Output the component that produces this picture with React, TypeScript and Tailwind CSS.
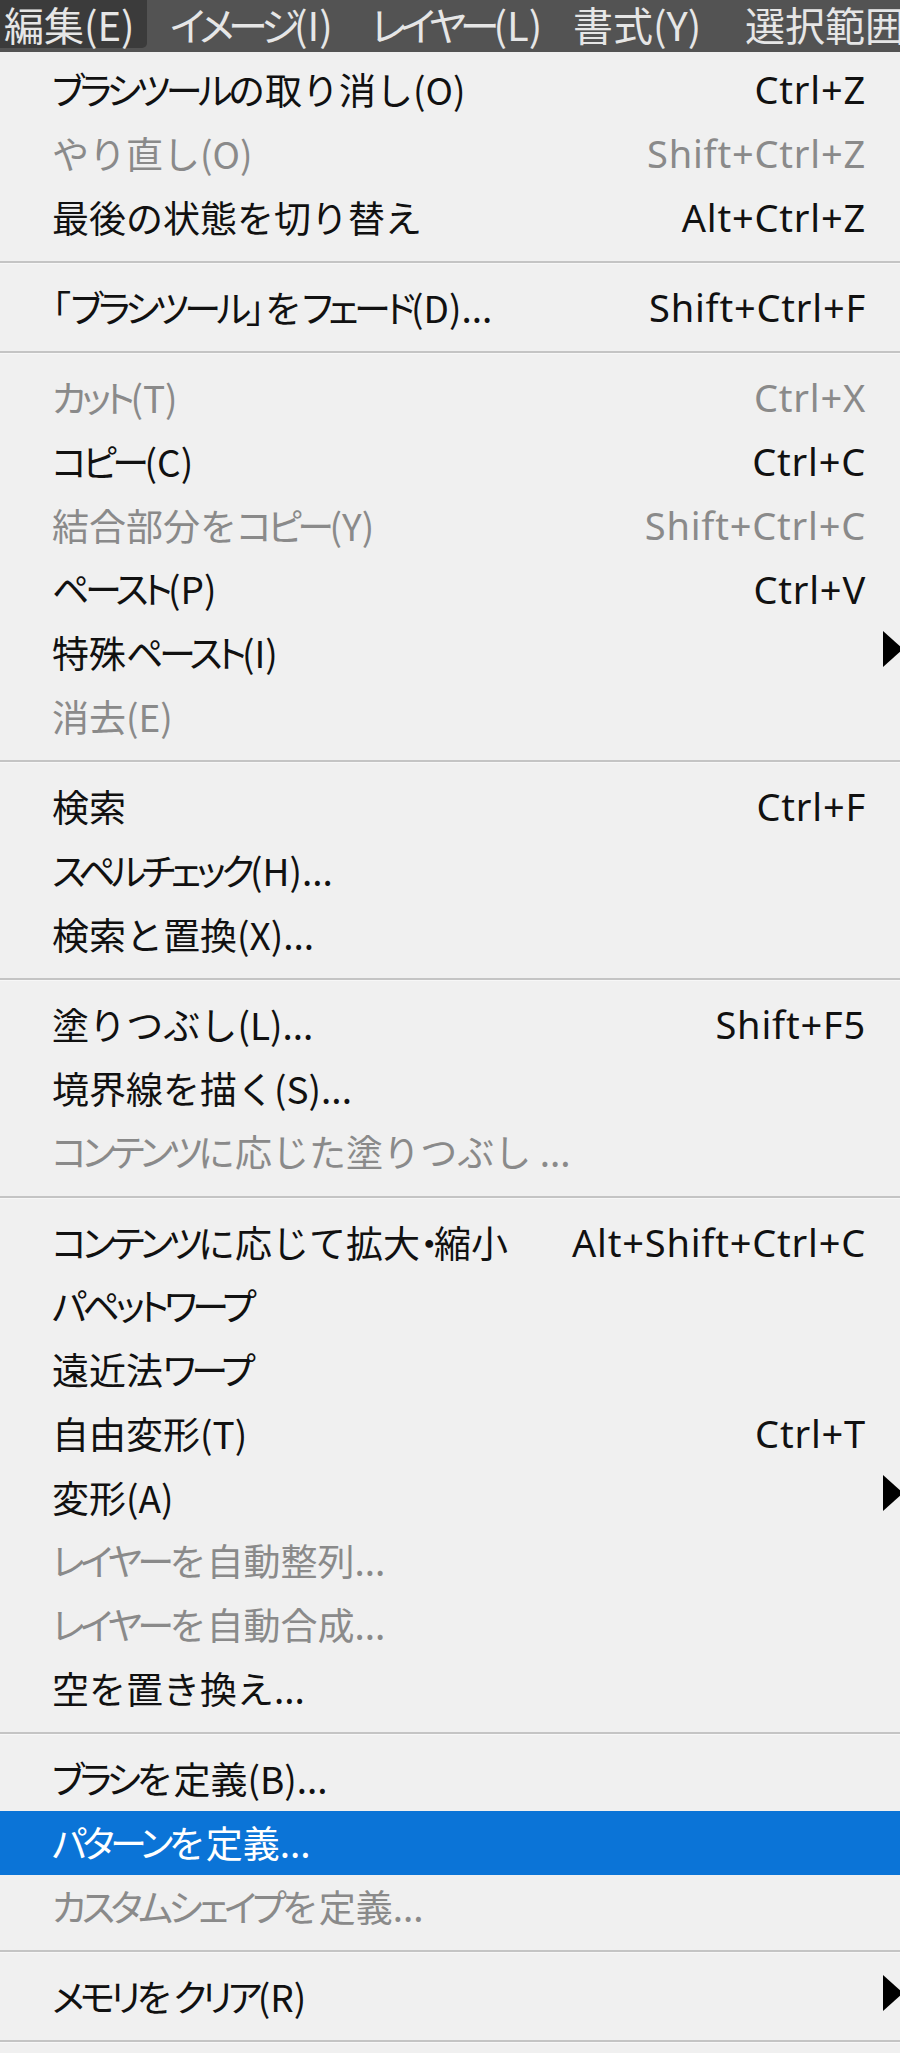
import React from "react";

type Item = {
  label: string;
  shortcut?: string;
  disabled?: boolean;
  submenu?: boolean;
  active?: boolean;
};

const groups: Item[][] = [
  [
    { label: "ブラシツールの取り消し(O)", shortcut: "Ctrl+Z" },
    { label: "やり直し(O)", shortcut: "Shift+Ctrl+Z", disabled: true },
    { label: "最後の状態を切り替え", shortcut: "Alt+Ctrl+Z" },
  ],
  [{ label: "「ブラシツール」をフェード(D)...", shortcut: "Shift+Ctrl+F" }],
  [
    { label: "カット(T)", shortcut: "Ctrl+X", disabled: true },
    { label: "コピー(C)", shortcut: "Ctrl+C" },
    { label: "結合部分をコピー(Y)", shortcut: "Shift+Ctrl+C", disabled: true },
    { label: "ペースト(P)", shortcut: "Ctrl+V" },
    { label: "特殊ペースト(I)", submenu: true },
    { label: "消去(E)", disabled: true },
  ],
  [
    { label: "検索", shortcut: "Ctrl+F" },
    { label: "スペルチェック(H)..." },
    { label: "検索と置換(X)..." },
  ],
  [
    { label: "塗りつぶし(L)...", shortcut: "Shift+F5" },
    { label: "境界線を描く(S)..." },
    { label: "コンテンツに応じた塗りつぶし ...", disabled: true },
  ],
  [
    { label: "コンテンツに応じて拡大・縮小", shortcut: "Alt+Shift+Ctrl+C" },
    { label: "パペットワープ" },
    { label: "遠近法ワープ" },
    { label: "自由変形(T)", shortcut: "Ctrl+T" },
    { label: "変形(A)", submenu: true },
    { label: "レイヤーを自動整列...", disabled: true },
    { label: "レイヤーを自動合成...", disabled: true },
    { label: "空を置き換え..." },
  ],
  [
    { label: "ブラシを定義(B)..." },
    { label: "パターンを定義...", active: true },
    { label: "カスタムシェイプを定義...", disabled: true },
  ],
  [{ label: "メモリをクリア(R)", submenu: true }],
];

function JP({ text, bar }: { text: string; bar?: boolean }) {
  const parts = text
    .split(/([\u3040-\u309F]+|[\u30A0-\u30FF]+)/)
    .filter((p) => p !== "");
  return (
    <>
      {parts.map((p, i) => {
        if (/^[\u3040-\u309F]+$/.test(p)) {
          return (
            <span key={i} className="[font-feature-settings:normal]">
              {p}
            </span>
          );
        }
        if (/^[\u30A0-\u30FF]+$/.test(p)) {
          return (
            <span
              key={i}
              className={bar ? "tracking-[-6px]" : "tracking-[-4.5px]"}
            >
              {p}
            </span>
          );
        }
        return <span key={i}>{p}</span>;
      })}
    </>
  );
}

function Row({ item }: { item: Item }) {
  const color = item.active
    ? "text-white bg-[#0b74d7]"
    : item.disabled
    ? "text-[#8a8a8a]"
    : "text-[#111111]";
  return (
    <div
      className={`flex h-[63.75px] items-center pl-[52px] pr-[34px] leading-normal ${color}`}
    >
      <span className="whitespace-nowrap font-['Noto_Sans_CJK_JP',sans-serif] text-[37px]">
        <JP text={item.label} />
      </span>
      <span className="flex-1" />
      {item.shortcut && (
        <span className="whitespace-nowrap font-['Noto_Sans',sans-serif] text-[38px] tracking-[0.8px] [font-feature-settings:normal]">
          {item.shortcut}
        </span>
      )}
      {item.submenu && (
        <svg
          width="20"
          height="36"
          viewBox="0 0 20 36"
          className="-mr-[37px] -mt-[8px] shrink-0"
        >
          <polygon points="0,0 20,18 0,36" fill="#000" />
        </svg>
      )}
    </div>
  );
}

function Separator() {
  return (
    <div className="flex h-[26.5px] flex-col justify-center">
      <div className="h-[2px] bg-[#c4c4c4]" />
      <div className="h-[1px] bg-[#f7f7f7]" />
    </div>
  );
}

export default function App() {
  return (
    <div className="w-[900px] h-[2053px] overflow-hidden bg-[#f0f0f0] [font-feature-settings:'palt'] font-['Noto_Sans_CJK_JP',sans-serif]">
      <div className="flex h-[52px] items-start bg-[#535353] text-[40px] leading-normal text-[#e6e6e6]">
        <div className="flex h-[48px] w-[147px] shrink-0 items-center rounded-br-[5px] bg-[#3b3b3b] pl-[4px]">
          <span className="whitespace-nowrap">
            <JP text="編集(E)" bar />
          </span>
        </div>
        <div className="ml-[23px] flex h-[48px] w-[201px] shrink-0 items-center">
          <span className="whitespace-nowrap">
            <JP text="イメージ(I)" bar />
          </span>
        </div>
        <div className="flex h-[48px] w-[202px] shrink-0 items-center">
          <span className="whitespace-nowrap">
            <JP text="レイヤー(L)" bar />
          </span>
        </div>
        <div className="flex h-[48px] w-[172px] shrink-0 items-center">
          <span className="whitespace-nowrap">
            <JP text="書式(Y)" bar />
          </span>
        </div>
        <div className="flex h-[48px] shrink-0 items-center">
          <span className="whitespace-nowrap">
            <JP text="選択範囲" bar />
          </span>
        </div>
      </div>
      <div className="pt-[6px]">
        {groups.map((g, gi) => (
          <div key={gi}>
            {g.map((item, ii) => (
              <Row key={ii} item={item} />
            ))}
            <Separator />
          </div>
        ))}
      </div>
    </div>
  );
}
